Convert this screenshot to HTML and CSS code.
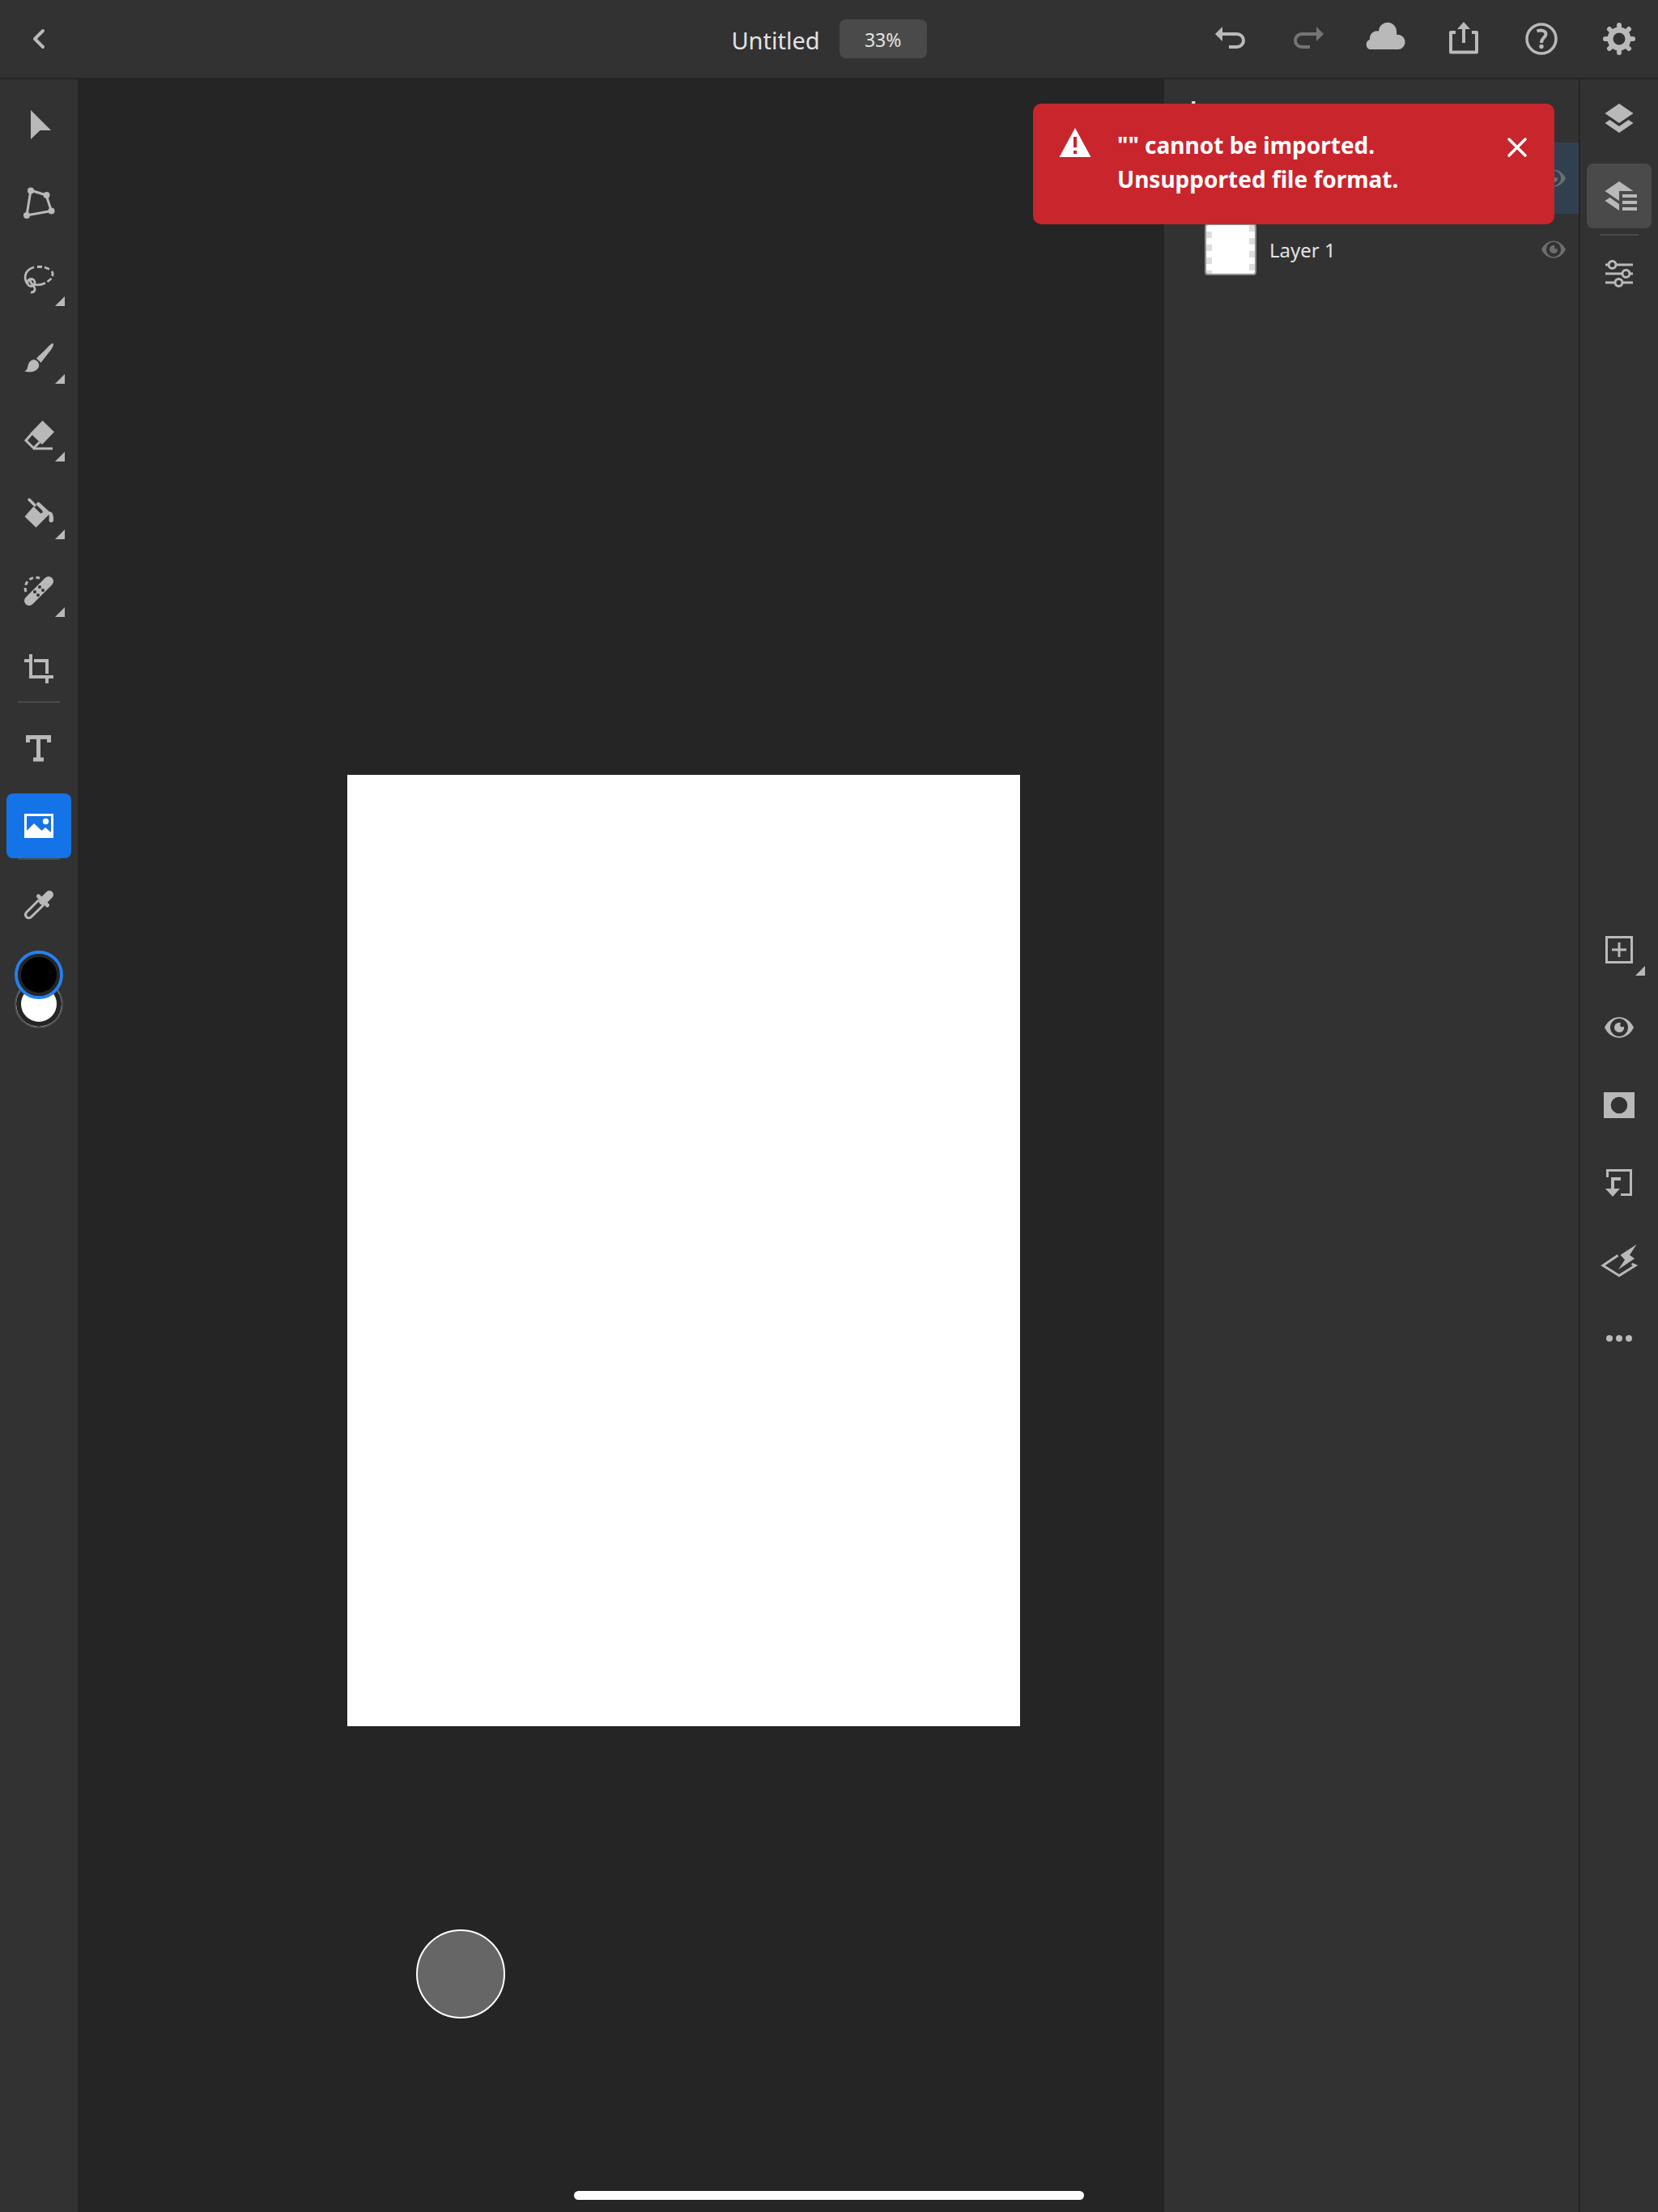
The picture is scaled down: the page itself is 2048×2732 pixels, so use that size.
FILE: index.html
```html
<!DOCTYPE html>
<html lang="en">
<head>
<meta charset="utf-8">
<meta name="viewport" content="width=device-width, initial-scale=1">
<title>Untitled</title>
<link rel="stylesheet" href="styles.css">
</head>
<body>
<div class="app">
  <header class="topbar">
    <div class="topbar-start">
      <button class="tool" type="button" aria-label="Back"><svg class="icon" viewBox="0 0 40 40"><path d="M25 10L15 20L25 30" fill="none" stroke="currentColor" stroke-width="4" stroke-linecap="round" stroke-linejoin="round"/></svg></button>
    </div>
    <div class="topbar-title">
      <h1 class="doc-name">Untitled</h1>
      <button class="zoom-level" type="button">33%</button>
    </div>
    <div class="topbar-actions">
      <button class="tool" type="button" aria-label="Undo"><svg class="icon" viewBox="0 0 40 40"><path d="M8 14H28A8 8 0 0 1 28 30H18" fill="none" stroke="currentColor" stroke-width="4"/><path d="M10 5V23L1 14Z"/></svg></button>
      <button class="tool" type="button" aria-label="Redo" disabled><svg class="icon" viewBox="0 0 40 40"><path d="M32 14H12A8 8 0 0 0 12 30H22" fill="none" stroke="currentColor" stroke-width="4"/><path d="M30 5V23L39 14Z"/></svg></button>
      <button class="tool" type="button" aria-label="Cloud documents"><svg class="icon icon-wide" viewBox="2 0 48 40"><path d="M6 33A6.500 6.500 0 0 1 5.500 21Q6.500 20.500 6 20A9 9 0 0 1 17 10.500A11 11 0 0 1 39 11Q39.500 13 39 15A9 9 0 0 1 42 33Z"/></svg></button>
      <button class="tool" type="button" aria-label="Share"><svg class="icon" viewBox="0 0 40 40"><path d="M10 12H4V36.500H36V12H30" fill="none" stroke="currentColor" stroke-width="4" stroke-linejoin="round"/><path d="M20 8V25" fill="none" stroke="currentColor" stroke-width="4"/><path d="M20 -1L28 8H12Z"/></svg></button>
      <button class="tool" type="button" aria-label="Help"><svg class="icon" viewBox="0 0 40 40"><circle cx="20" cy="20" r="18" fill="none" stroke="currentColor" stroke-width="3.500"/><path d="M14.500 10.500C19 8.500 25.500 9.500 25.500 14C25.500 18.500 20 18.500 20 25" fill="none" stroke="currentColor" stroke-width="4"/><circle cx="20" cy="29.500" r="2.700"/></svg></button>
      <button class="tool" type="button" aria-label="Settings"><svg class="icon" viewBox="0 0 40 40"><circle cx="20" cy="20" r="11" fill="none" stroke="currentColor" stroke-width="7"/><g fill="none" stroke="currentColor" stroke-width="6" stroke-linecap="round"><path d="M20 3V6M20 34V37M3 20H6M34 20H37M8 8L10 10M30 30L32 32M8 32L10 30M30 10L32 8"/></g></svg></button>
    </div>
  </header>

  <div class="workspace">
    <nav class="toolbar" aria-label="Tools">
      <div class="tool-group">
        <button class="tool" type="button" aria-label="Move"><svg class="icon" viewBox="0 0 40 40"><path d="M10 2V38L21.500 27H35Z"/></svg></button>
        <button class="tool" type="button" aria-label="Transform"><svg class="icon" viewBox="0 0 40 40"><path d="M10 5L5 36L35.500 30.500L29 11Z" fill="none" stroke="currentColor" stroke-width="3"/><circle cx="10" cy="5.500" r="4"/><circle cx="29.500" cy="11" r="4"/><circle cx="35.500" cy="30.500" r="4"/><circle cx="5" cy="36" r="4"/></svg></button>
        <button class="tool has-more" type="button" aria-label="Lasso"><svg class="icon" viewBox="0 0 40 40"><g fill="none" stroke="currentColor" stroke-width="2.800"><path d="M6 25C-1 14 6 6 14 4M18 3.500H24M27 4L33 6.500M36 9C37.500 11 37.500 13 36.500 15M35.500 18L30.500 22M28 23.500C23 26 17 26.500 12 25"/><circle cx="10.500" cy="23" r="4.500"/><path d="M9 19C9 25 16 27 15 32Q14 35.500 10 35"/></g></svg></button>
        <button class="tool has-more" type="button" aria-label="Brush"><svg class="icon" viewBox="0 0 40 40"><path d="M37.500 2.200C39 4 36 9 33 12.500L22.500 26L17 20.500L30 8C33 5 36 1.500 37.500 2.200Z"/><path d="M15.500 22.500C19 24 22 28 19 33C15 38 8 38.500 2 36.500C6 35 5.500 33 7 28C8.500 24 12 21.500 15.500 22.500Z"/></svg></button>
        <button class="tool has-more" type="button" aria-label="Eraser"><svg class="icon" viewBox="0 0 40 40"><path d="M24.500 1.500L39 15.500L24 31L9.500 17Z"/><path d="M11 18L4 26L13.500 35.500L21 28" fill="none" stroke="currentColor" stroke-width="3"/><path d="M13 36H37" fill="none" stroke="currentColor" stroke-width="3"/></svg></button>
        <button class="tool has-more" type="button" aria-label="Fill"><svg class="icon" viewBox="0 0 40 40"><path d="M13.500 11.500L21.500 19.500A2 2 0 0 0 24.500 17L17 9.500A2.500 2.500 0 0 1 20.500 6.500L33 18C37 17 38.500 24 38 29A2.800 2.800 0 0 1 32.500 29Q33 25 32.500 21.500L16.500 37.500L2.500 24Z"/><path d="M8 3L15 10" fill="none" stroke="currentColor" stroke-width="3.500" stroke-linecap="round"/></svg></button>
        <button class="tool has-more" type="button" aria-label="Healing brush"><svg class="icon" viewBox="0 0 40 40"><path d="M8 32L32 8" fill="none" stroke="currentColor" stroke-width="12" stroke-linecap="round"/><path d="M4 21C0 11 10 0 21 4" fill="none" stroke="currentColor" stroke-width="3" stroke-dasharray="5 3.500"/><g class="cutout"><circle cx="21" cy="15" r="2"/><circle cx="25" cy="19" r="2"/><circle cx="15" cy="21" r="2"/><circle cx="19" cy="25" r="2"/></g></svg></button>
        <button class="tool" type="button" aria-label="Crop"><svg class="icon" viewBox="0 0 40 40"><path d="M10 2V30H38M2 10H8M14 10H30V26M30 32V38" fill="none" stroke="currentColor" stroke-width="4"/></svg></button>
      </div>
      <hr class="divider">
      <div class="tool-group">
        <button class="tool" type="button" aria-label="Type"><svg class="icon" viewBox="0 0 40 40"><path d="M6.500 13V6.500H32.500V13M19.500 6V34M13 34H26" fill="none" stroke="currentColor" stroke-width="5"/></svg></button>
        <button class="tool tool-active" type="button" aria-label="Place photo" aria-pressed="true"><svg class="icon" viewBox="0 0 40 40"><path d="M2 5H38V35H2ZM5 8V26L14 17L23.500 26L28 22L35 28V8Z" fill-rule="evenodd"/><circle cx="28.500" cy="14.500" r="3.700"/></svg></button>
      </div>
      <hr class="divider">
      <div class="tool-group">
        <button class="tool" type="button" aria-label="Eyedropper"><svg class="icon" viewBox="0 0 40 40"><path d="M20 13.500L4.500 29C1.500 33 6 37.500 10 35L26 19.500" fill="none" stroke="currentColor" stroke-width="3"/><path d="M33 7L25 15" fill="none" stroke="currentColor" stroke-width="10" stroke-linecap="round"/><path d="M19.500 9L30.500 20" fill="none" stroke="currentColor" stroke-width="5" stroke-linecap="round"/></svg></button>
        <div class="swatches">
          <button class="swatch swatch-fore" type="button" aria-label="Foreground color"></button>
          <button class="swatch swatch-back" type="button" aria-label="Background color"></button>
        </div>
      </div>
    </nav>

    <main class="stage">
      <div class="artboard"></div>
      <div class="touch-shortcut"></div>
    </main>

    <aside class="layers" aria-label="Layers">
      <h2 class="layers-title">Layers</h2>
      <ul class="layer-list">
        <li class="layer layer-selected">
          <span class="thumb"></span>
          <button class="visibility" type="button" aria-label="Toggle visibility"><svg class="icon-eye" viewBox="0 0 36 28"><path d="M0 14C8-3 28-3 36 14C28 31 8 31 0 14ZM18 3A11 11 0 1 0 18 25A11 11 0 1 0 18 3ZM18 8Q20 8 20 9C18 12 20 14.500 24 13Q24.500 20 18 20A6 6 0 1 1 18 8Z" fill-rule="evenodd"/></svg></button>
        </li>
        <li class="layer">
          <span class="thumb"></span>
          <span class="layer-name">Layer 1</span>
          <button class="visibility" type="button" aria-label="Toggle visibility"><svg class="icon-eye" viewBox="0 0 36 28"><path d="M0 14C8-3 28-3 36 14C28 31 8 31 0 14ZM18 3A11 11 0 1 0 18 25A11 11 0 1 0 18 3ZM18 8Q20 8 20 9C18 12 20 14.500 24 13Q24.500 20 18 20A6 6 0 1 1 18 8Z" fill-rule="evenodd"/></svg></button>
        </li>
      </ul>
    </aside>

    <nav class="rail" aria-label="Panels">
      <div class="rail-top">
        <button class="tool" type="button" aria-label="Compact layers"><svg class="icon" viewBox="0 0 40 40"><path d="M20 2L37.500 14L20 26L2.500 14Z"/><path d="M8.500 22L2.500 26L20 38L37.500 26L31.500 22L20 30Z"/></svg></button>
        <button class="tool tool-open" type="button" aria-label="Detailed layers" aria-pressed="true"><svg class="icon icon-wide" viewBox="-4 0 48 40"><path d="M20 2L37.500 14H20V26L2.500 14Z"/><path d="M8.500 22L2.500 26L20 38V30Z"/><path d="M24 20H42M24 28H42M24 36H42" fill="none" stroke="currentColor" stroke-width="4"/></svg></button>
        <hr class="divider">
        <button class="tool" type="button" aria-label="Properties"><svg class="icon" viewBox="0 0 40 40"><g fill="none" stroke="currentColor" stroke-width="3"><path d="M3 9H7M16 9H37M3 20H24M33 20H37M3 31H15M24 31H37"/><circle cx="11.500" cy="9" r="4.500"/><circle cx="28.500" cy="20" r="4.500"/><circle cx="19.500" cy="31" r="4.500"/></g></svg></button>
      </div>
      <div class="rail-middle">
        <button class="tool has-more" type="button" aria-label="Add layer"><svg class="icon" viewBox="0 0 40 40"><path d="M4.500 4.500H35.500V35.500H4.500ZM20 11V29M11 20H29" fill="none" stroke="currentColor" stroke-width="3"/></svg></button>
        <button class="tool" type="button" aria-label="Layer visibility"><svg class="icon-eye" viewBox="0 0 36 28"><path d="M0 14C8-3 28-3 36 14C28 31 8 31 0 14ZM18 3A11 11 0 1 0 18 25A11 11 0 1 0 18 3ZM18 8Q20 8 20 9C18 12 20 14.500 24 13Q24.500 20 18 20A6 6 0 1 1 18 8Z" fill-rule="evenodd"/></svg></button>
        <button class="tool" type="button" aria-label="Mask"><svg class="icon" viewBox="0 0 40 40"><path d="M1 4H39V36H1ZM20 9.700A10.300 10.300 0 1 0 20 30.300A10.300 10.300 0 1 0 20 9.700Z" fill-rule="evenodd"/></svg></button>
        <button class="tool" type="button" aria-label="Clip layer"><svg class="icon" viewBox="0 0 40 40"><path d="M5.500 13V4.500H34.500V34.500H22" fill="none" stroke="currentColor" stroke-width="3"/><path d="M12 30V15H22" fill="none" stroke="currentColor" stroke-width="4"/><path d="M3 27H21L12 37Z"/></svg></button>
        <button class="tool" type="button" aria-label="Layer actions"><svg class="icon icon-wide" viewBox="0 0 48 40"><path d="M22.500 13.500L4 26L24 38.500L44 26L39.500 24" fill="none" stroke="currentColor" stroke-width="3"/><path d="M45.500 0L25.500 13L31 19L23 31L43 17.500L37 13Z"/></svg></button>
        <button class="tool" type="button" aria-label="More"><svg class="icon" viewBox="0 0 40 40"><circle cx="8" cy="20" r="4"/><circle cx="20" cy="20" r="4"/><circle cx="32" cy="20" r="4"/></svg></button>
      </div>
    </nav>
  </div>

  <div class="toast" role="alert">
    <svg class="toast-icon" viewBox="0 0 40 36"><path d="M20 0L39.500 36H.5ZM18 11V24H22V11ZM18 28V32H22V28Z" fill-rule="evenodd"/></svg>
    <p class="toast-text">"" cannot be imported.<br>Unsupported file format.</p>
    <button class="toast-close" type="button" aria-label="Close"><svg class="close-icon" viewBox="0 0 24 24"><path d="M2 2L22 22M22 2L2 22" fill="none" stroke="currentColor" stroke-width="3.500" stroke-linecap="round"/></svg></button>
  </div>

  <div class="home-indicator"></div>
</div>
</body>
</html>
```
FILE: styles.css
```css
:root {
  --bar: #323232;
  --well: #252525;
  --raised: #4a4a4a;
  --glyph: #b9b9b9;
  --text: #e3e3e3;
  --accent: #1473e6;
  --negative: #c9252d;
}

* {
  box-sizing: border-box;
}

body {
  margin: 0;
  background: var(--well);
  color: var(--text);
  font-family: "Noto Sans", "Open Sans", sans-serif;
  font-size: 24px;
}

button {
  margin: 0;
  padding: 0;
  border: 0;
  background: none;
  color: inherit;
  font: inherit;
}

.app {
  position: relative;
  display: flex;
  flex-direction: column;
  min-height: 100vh;
}

.topbar {
  display: grid;
  grid-template-columns: 1fr auto 1fr;
  align-items: center;
  height: 98px;
  padding: 0 8px;
  border-bottom: 2px solid var(--well);
  background: var(--bar);
}

.topbar-start {
  display: flex;
}

.topbar-title {
  display: flex;
  align-items: center;
  gap: 24px;
}

.doc-name {
  margin: 0;
  padding-top: 3px;
  font-size: 29px;
  font-weight: 400;
  line-height: 45px;
}

.zoom-level {
  width: 108px;
  height: 48px;
  padding-top: 2px;
  border-radius: 8px;
  background: var(--raised);
  font-size: 23px;
}

.topbar-actions {
  display: flex;
  justify-content: flex-end;
  gap: 16px;
}

.tool {
  position: relative;
  display: grid;
  place-items: center;
  width: 80px;
  height: 80px;
  border-radius: 8px;
  color: var(--glyph);
}

.tool:disabled {
  color: #747474;
}

.tool-active {
  background: var(--accent);
  color: #fff;
}

.tool-open {
  background: var(--raised);
}

.has-more::after {
  position: absolute;
  right: 8px;
  bottom: 8px;
  width: 12px;
  height: 12px;
  background: var(--glyph);
  clip-path: polygon(100% 0, 100% 100%, 0 100%);
  content: "";
}

svg {
  display: block;
  overflow: visible;
  fill: currentColor;
}

.icon {
  width: 40px;
  height: 40px;
}

.icon-wide {
  width: 48px;
}

.icon-eye {
  width: 36px;
  height: 28px;
}

.cutout {
  fill: var(--bar);
}

.workspace {
  display: grid;
  flex: 1;
  grid-template-columns: 96px 1fr 512px 98px;
}

.toolbar {
  padding: 0 8px;
  background: var(--bar);
}

.tool-group {
  display: grid;
  gap: 16px;
  padding-top: 16px;
}

.divider {
  width: 52px;
  height: 2px;
  margin: 0 auto;
  border: 0;
  background: var(--raised);
}

.swatches {
  display: flex;
  flex-direction: column;
  align-items: center;
}

.swatch {
  width: 60px;
  height: 60px;
  border: 2px solid #505050;
  border-radius: 50%;
  box-shadow: inset 0 0 0 6px var(--well);
}

.swatch-fore {
  z-index: 1;
  border: 4px solid #2680eb;
  background: #000;
  box-shadow: inset 0 0 0 4px var(--well);
}

.swatch-back {
  margin-top: -24px;
  background: #fff;
}

.stage {
  position: relative;
}

.artboard {
  position: absolute;
  top: 859px;
  left: 333px;
  width: 831px;
  height: 1175px;
  background: #fff;
}

.touch-shortcut {
  position: absolute;
  top: 2285px;
  left: 418px;
  width: 110px;
  height: 110px;
  border: 2px solid #fff;
  border-radius: 50%;
  background: #666;
}

.layers {
  background: var(--bar);
}

.layers-title {
  margin: 0;
  padding: 16px 32px 22px;
  font-size: 26px;
  font-weight: 700;
  line-height: 40px;
}

.layer-list {
  margin: 0;
  padding: 0;
  list-style: none;
}

.layer {
  display: flex;
  align-items: center;
  gap: 16px;
  height: 88px;
  padding: 0 16px 0 50px;
}

.layer-selected {
  background: #304050;
}

.thumb {
  width: 64px;
  height: 64px;
  border: 2px solid #8e8e8e;
  border-radius: 4px;
  background:
    linear-gradient(#fff, #fff) center / 46px 100% no-repeat,
    repeating-conic-gradient(#ddd 0 25%, #fff 0 50%) 0 0 / 30px 16px;
}

.layer-name {
  padding-top: 2px;
  line-height: 32px;
}

.visibility {
  margin-left: auto;
  color: #6e6e6e;
}

.visibility .icon-eye {
  width: 30px;
  height: 24px;
}

.rail {
  display: grid;
  grid-template-rows: 1fr auto 1fr;
  padding: 8px 8px 12px;
  border-left: 2px solid var(--well);
  background: var(--bar);
}

.rail-top,
.rail-middle {
  display: flex;
  flex-direction: column;
  gap: 16px;
}

.rail-top .divider {
  width: 48px;
  margin: -9px auto;
}

.toast {
  position: absolute;
  top: 128px;
  right: 128px;
  display: flex;
  gap: 32px;
  width: 644px;
  padding: 30px 32px 35px;
  border-radius: 10px;
  background: var(--negative);
  color: #fff;
}

.toast-icon {
  width: 40px;
  height: 36px;
}

.toast-text {
  flex: 1;
  margin: 0;
  font-size: 28px;
  font-weight: 700;
  line-height: 42px;
}

.toast-close {
  align-self: flex-start;
  padding: 12px 2px;
}

.close-icon {
  width: 24px;
  height: 24px;
}

.home-indicator {
  position: absolute;
  bottom: 15px;
  left: 50%;
  width: 630px;
  height: 11px;
  border-radius: 6px;
  background: #fff;
  translate: -50%;
}
```
